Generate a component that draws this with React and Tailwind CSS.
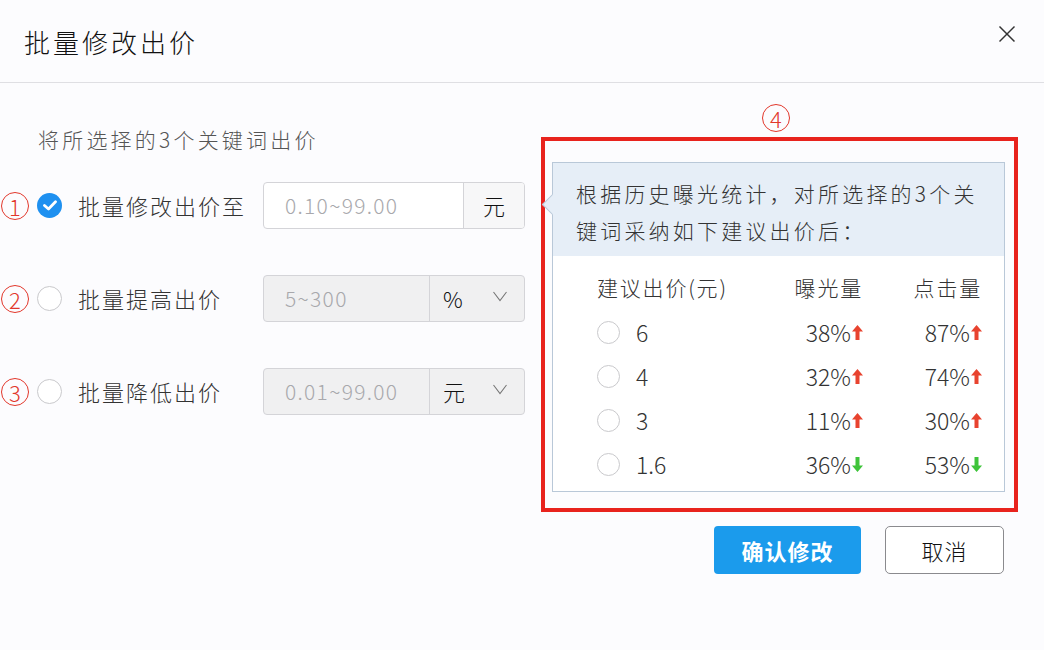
import clsx from 'clsx';

const FONT = { fontFamily: '"Noto Sans CJK SC", "Noto Sans", "Liberation Sans", sans-serif' };

const rows = [
  { price: '6', show: '38%', showUp: true, click: '87%', clickUp: true },
  { price: '4', show: '32%', showUp: true, click: '74%', clickUp: true },
  { price: '3', show: '11%', showUp: true, click: '30%', clickUp: true },
  { price: '1.6', show: '36%', showUp: false, click: '53%', clickUp: false },
];

const Circled = ({ n, className }) => (
  <span
    className={clsx(
      'flex h-[28px] w-[28px] shrink-0 items-center justify-center rounded-full border-[1.5px] border-[#e2372b] text-[22px] font-light leading-none text-[#e2372b]',
      className
    )}
  >
    {n}
  </span>
);

const Arrow = ({ up }) => (
  <svg width="11" height="15" viewBox="0 0 11 15" className="ml-[1px] inline-block">
    {up ? (
      <polygon points="5.5,0 11,6.5 7.5,6.5 7.5,15 3.5,15 3.5,6.5 0,6.5" fill="#e8432f" />
    ) : (
      <polygon points="5.5,15 11,8.5 7.5,8.5 7.5,0 3.5,0 3.5,8.5 0,8.5" fill="#3ec43a" />
    )}
  </svg>
);

const Chevron = () => (
  <svg width="16" height="11" viewBox="0 0 16 11" className="ml-auto mr-[16px] -mt-[4px]">
    <polyline points="1.5,1 8,9.5 14.5,1" fill="none" stroke="#777" strokeWidth="1.1" />
  </svg>
);

const Radio = () => (
  <span className="h-[23px] w-[23px] shrink-0 rounded-full border border-[#c9c9cc] bg-white" />
);

const OptionRow = ({ n, checked, label, placeholder, unit, select, splitAt, className }) => (
  <div className={clsx('flex h-[47px] items-center', className)}>
    <Circled n={n} className="ml-[1px]" />
    {checked ? (
      <span className="ml-[8px] flex h-[25px] w-[25px] shrink-0 items-center justify-center rounded-full bg-[#1e90f0]">
        <svg width="14" height="11" viewBox="0 0 14 11">
          <polyline points="1.5,5.5 5.5,9 12.5,1.8" fill="none" stroke="#fff" strokeWidth="2.8" strokeLinecap="round" strokeLinejoin="round" />
        </svg>
      </span>
    ) : (
      <span className="ml-[8px] h-[25px] w-[25px] shrink-0 rounded-full border border-[#c9c9cc] bg-white" />
    )}
    <span className="ml-[16px] w-[185px] text-[22px] font-light tracking-[2px] text-[#333]">{label}</span>
    <div
      className={clsx(
        'flex h-[47px] w-[262px] overflow-hidden rounded-[4px] border border-[#d4d4d8]',
        select ? 'bg-[#f0f0f1]' : 'bg-white'
      )}
    >
      <div
        className="flex items-center border-r border-[#d4d4d8] pl-[21px] text-[21px] font-light tracking-[1.3px] text-[#a8a8ac]"
        style={{ width: splitAt }}
      >
        {placeholder}
      </div>
      <div
        className={clsx(
          'flex flex-1 items-center text-[22px] font-light text-[#111]',
          select ? 'pl-[13px]' : 'justify-center bg-[#f7f7f8]'
        )}
      >
        {unit}
        {select && <Chevron />}
      </div>
    </div>
  </div>
);

export default function App() {
  return (
    <div className="h-[650px] w-[1044px] overflow-hidden bg-[#fcfcfe]" style={FONT}>
      <div className="flex h-[83px] items-center justify-between border-b border-[#dfdfe3] pl-[24px] pr-[28px]">
        <h1 className="text-[26px] font-light tracking-[3px] text-[#111]">批量修改出价</h1>
        <svg width="18" height="18" viewBox="0 0 18 18" className="-mt-[14px]">
          <line x1="1.5" y1="1.5" x2="16.5" y2="16.5" stroke="#333" strokeWidth="1.5" />
          <line x1="16.5" y1="1.5" x2="1.5" y2="16.5" stroke="#333" strokeWidth="1.5" />
        </svg>
      </div>

      <div className="flex">
        <div className="w-[541px] pt-[41px]">
          <p className="pl-[38px] text-[21px] font-light leading-[30px] tracking-[3.2px] text-[#555]">将所选择的3个关键词出价</p>
          <OptionRow
            n="1"
            checked
            label="批量修改出价至"
            placeholder="0.10~99.00"
            unit="元"
            splitAt={200}
            className="mt-[28px]"
          />
          <OptionRow
            n="2"
            label="批量提高出价"
            placeholder="5~300"
            unit="%"
            select
            splitAt={166}
            className="mt-[46px]"
          />
          <OptionRow
            n="3"
            label="批量降低出价"
            placeholder="0.01~99.00"
            unit="元"
            select
            splitAt={166}
            className="mt-[46px]"
          />
        </div>

        <div className="flex flex-1 flex-col pt-[21px]">
          <Circled n="4" className="ml-[221px]" />
          <div className="mt-[5px] w-[477px] border-4 border-[#e8231d] pb-[16px] pl-[7px] pr-[9px] pt-[21px]">
            <div className="relative h-[330px] border border-[#b9c8d8] bg-white">
              <span className="absolute left-[-8px] top-[34px] h-[15px] w-[15px] rotate-45 border-b border-l border-[#b9c8d8] bg-[#e6eef7]" />
              <div className="relative h-[93px] bg-[#e6eef7] pl-[23px] pt-[12px] text-[21px] font-light leading-[37px] tracking-[3.2px] text-[#333]">
                <p>根据历史曝光统计，对所选择的3个关</p>
                <p>键词采纳如下建议出价后：</p>
              </div>
              <div className="pl-[44px] pr-[22px] pt-[10px] text-[#333]">
                <div className="flex h-[44px] items-center text-[21px] font-light tracking-[1.8px]">
                  <span className="flex-1">建议出价(元)</span>
                  <span className="w-[100px] text-right">曝光量</span>
                  <span className="w-[119px] text-right">点击量</span>
                </div>
                {rows.map((r) => (
                  <div key={r.price} className="flex h-[44px] items-center text-[23px] font-light">
                    <span className="flex flex-1 items-center">
                      <Radio />
                      <span className="ml-[16px]">{r.price}</span>
                    </span>
                    <span className="flex w-[100px] items-center justify-end">
                      {r.show}
                      <Arrow up={r.showUp} />
                    </span>
                    <span className="flex w-[119px] items-center justify-end">
                      {r.click}
                      <Arrow up={r.clickUp} />
                    </span>
                  </div>
                ))}
              </div>
            </div>
          </div>
          <div className="mt-[14px] flex justify-end gap-[24px] pr-[40px]">
            <button
              type="button"
              className="h-[48px] w-[147px] rounded-[4px] bg-[#1b9bec] text-[22px] font-bold tracking-[1px] text-white"
            >
              确认修改
            </button>
            <button
              type="button"
              className="h-[48px] w-[119px] rounded-[5px] border border-[#8a8a8e] bg-white text-[22px] font-light tracking-[1px] text-[#111]"
            >
              取消
            </button>
          </div>
        </div>
      </div>
    </div>
  );
}
